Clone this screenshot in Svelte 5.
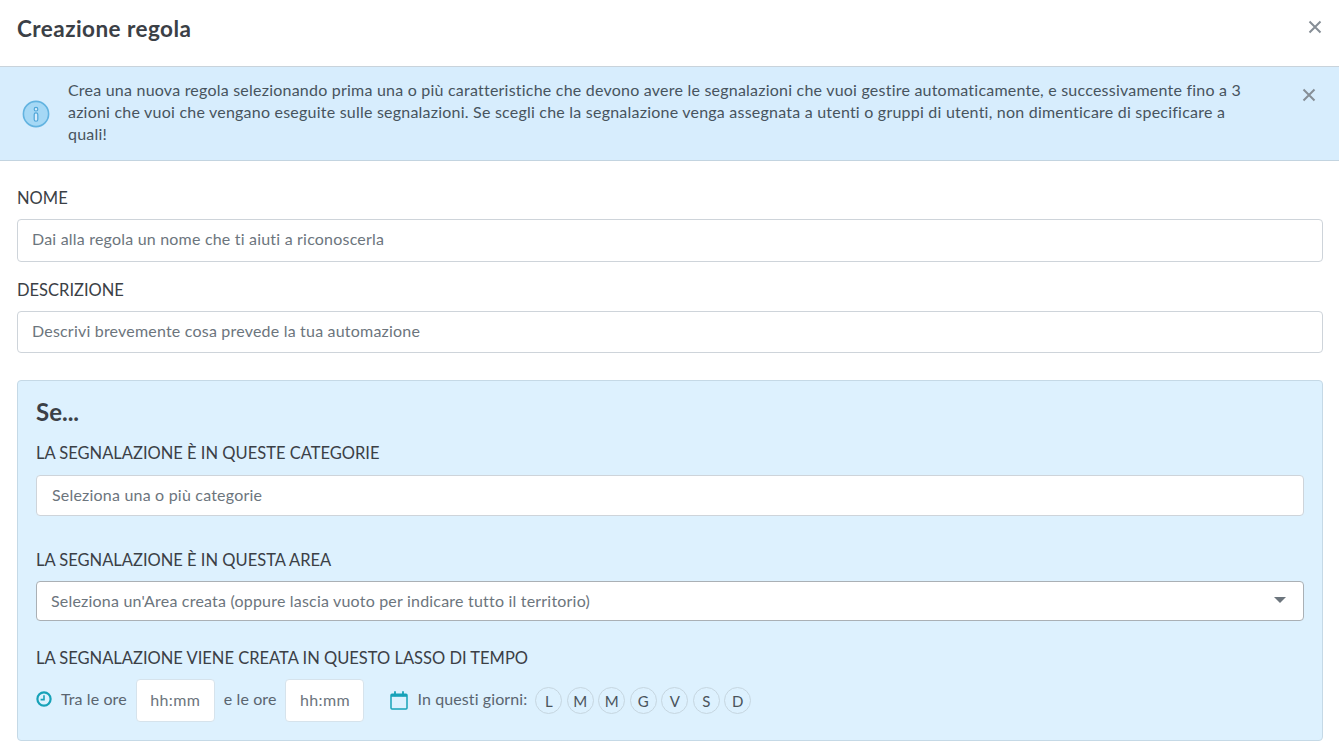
<script>
  const days = ['L', 'M', 'M', 'G', 'V', 'S', 'D'];
</script>

<div class="modal">
  <header class="head">
    <h2>Creazione regola</h2>
    <button class="close big" aria-label="Chiudi">
      <svg width="14" height="14" viewBox="0 0 14 14"><path d="M1.5 1.5l11 11M12.5 1.5l-11 11" /></svg>
    </button>
  </header>

  <div class="alert">
    <svg class="info" width="28" height="28" viewBox="0 0 28 28">
      <circle cx="14" cy="14" r="12.6" fill="#a5d8f5" stroke="#62b3e0" stroke-width="1.6" />
      <circle cx="14" cy="9.2" r="1.8" fill="#d6ecfc" stroke="#4fa6d8" stroke-width="1.2" />
      <rect x="12.2" y="12.8" width="3.6" height="8.4" rx="1.8" fill="#d6ecfc" stroke="#4fa6d8" stroke-width="1.2" />
    </svg>
    <p>Crea una nuova regola selezionando prima una o più caratteristiche che devono avere le segnalazioni che vuoi gestire automaticamente, e successivamente fino a 3 azioni che vuoi che vengano eseguite sulle segnalazioni. Se scegli che la segnalazione venga assegnata a utenti o gruppi di utenti, non dimenticare di specificare a quali!</p>
    <button class="close small" aria-label="Chiudi">
      <svg width="14" height="14" viewBox="0 0 14 14"><path d="M1.5 1.5l11 11M12.5 1.5l-11 11" /></svg>
    </button>
  </div>

  <div class="body">
    <label class="label" for="nome">NOME</label>
    <input id="nome" class="field" placeholder="Dai alla regola un nome che ti aiuti a riconoscerla" />

    <label class="label second" for="descr">DESCRIZIONE</label>
    <input id="descr" class="field desc" placeholder="Descrivi brevemente cosa prevede la tua automazione" />

    <section class="panel">
      <h3>Se...</h3>

      <div class="label">LA SEGNALAZIONE È IN QUESTE CATEGORIE</div>
      <input class="field cat" placeholder="Seleziona una o più categorie" />

      <div class="label area">LA SEGNALAZIONE È IN QUESTA AREA</div>
      <div class="select">
        <span>Seleziona un'Area creata (oppure lascia vuoto per indicare tutto il territorio)</span>
        <i class="caret"></i>
      </div>

      <div class="label time">LA SEGNALAZIONE VIENE CREATA IN QUESTO LASSO DI TEMPO</div>
      <div class="when">
        <svg class="clock" width="16" height="16" viewBox="0 0 16 16">
          <circle cx="8" cy="8" r="6.6" fill="none" stroke="#17a2b8" stroke-width="2.2" />
          <path d="M8 4.2V8.6H4.6" fill="none" stroke="#17a2b8" stroke-width="1.6" />
        </svg>
        <span class="txt first">Tra le ore</span>
        <input class="hour" placeholder="hh:mm" />
        <span class="txt">e le ore</span>
        <input class="hour" placeholder="hh:mm" />
        <svg class="cal" width="18" height="19" viewBox="0 0 18 19">
          <rect x="1" y="3.2" width="16" height="14.8" rx="1" fill="none" stroke="#17a2b8" stroke-width="1.5" />
          <path d="M1 3.2h16v2.6H1z" fill="#17a2b8" />
          <path d="M5 1v3.4M13 1v3.4" stroke="#17a2b8" stroke-width="1.8" stroke-linecap="round" />
        </svg>
        <span class="txt">In questi giorni:</span>
        <div class="days">
          {#each days as d}
            <span class="day">{d}</span>
          {/each}
        </div>
      </div>
    </section>
  </div>
</div>

<style>
  :global(body) {
    margin: 0;
    background: #fff;
    font-family: Lato, "Open Sans", sans-serif;
    color: #343a40;
  }

  .modal {
    height: 751px;
    overflow: hidden;
  }

  .head {
    display: flex;
    justify-content: space-between;
    height: 67px;
    padding: 0 17px;
    box-sizing: border-box;
    border-bottom: 1px solid #c9d3db;
  }

  h2 {
    margin: 15px 0 0;
    font-size: 22.5px;
    line-height: 28px;
    font-weight: 700;
    letter-spacing: 0.45px;
    color: #3b4046;
  }

  .close {
    border: 0;
    padding: 0;
    background: none;
    height: 14px;
  }

  .close path {
    fill: none;
    stroke: #868e96;
    stroke-width: 2;
  }

  .big {
    margin: 20px 0 0 0;
  }

  .alert {
    display: flex;
    align-items: center;
    height: 94px;
    box-sizing: border-box;
    padding-left: 22px;
    background: #d7edfd;
    border-bottom: 1px solid #c3d4e0;
  }

  .alert p {
    width: 1180px;
    margin: 0 0 3px 18px;
    font-size: 16px;
    line-height: 22px;
    letter-spacing: 0.22px;
    color: #47545e;
  }

  .small {
    align-self: flex-start;
    margin: 21px 0 0 54px;
  }

  .body {
    padding: 27px 16px 0 17px;
  }

  .label {
    display: block;
    font-size: 16.5px;
    line-height: 20px;
    color: #3b4046;
  }

  .second {
    margin-top: 18px;
  }

  .field {
    display: block;
    width: 100%;
    box-sizing: border-box;
    height: 43px;
    margin-top: 11px;
    padding: 0 14px 4px;
    background: #fff;
    border: 1px solid #ced4da;
    border-radius: 4px;
    font: inherit;
    font-size: 16px;
    letter-spacing: 0.2px;
    outline: none;
  }

  .desc {
    height: 42px;
    padding-bottom: 3px;
  }

  input::placeholder {
    color: #6c757d;
    opacity: 1;
  }

  .panel {
    margin-top: 27px;
    height: 361px;
    box-sizing: border-box;
    padding: 17px 18px 0;
    background: #ddf1fe;
    border: 1px solid #c5d9e6;
    border-radius: 4px;
  }

  h3 {
    margin: 0 0 17px;
    font-size: 24px;
    line-height: 28px;
    font-weight: 700;
    color: #3b4046;
  }

  .cat {
    height: 41px;
    margin-top: 12px;
    padding: 0 15px 3px;
  }

  .area {
    margin-top: 34px;
  }

  .select {
    display: flex;
    align-items: center;
    justify-content: space-between;
    height: 40px;
    margin-top: 11px;
    box-sizing: border-box;
    padding: 0 17px 2px 14px;
    background: #fff;
    border: 1px solid #aab0b5;
    border-radius: 4px;
    font-size: 16px;
    letter-spacing: 0.2px;
    color: #6c757d;
  }

  .caret {
    width: 0;
    height: 0;
    border: 6px solid transparent;
    border-top-color: #6c757d;
    border-bottom: 0;
  }

  .time {
    margin-top: 27px;
  }

  .when {
    display: flex;
    align-items: center;
    height: 43px;
    margin-top: 11px;
  }

  .txt {
    font-size: 16px;
    letter-spacing: 0.1px;
    color: #5a6570;
    position: relative;
    top: -2px;
  }

  .first {
    margin-left: 9px;
  }

  .clock {
    position: relative;
    top: -2px;
  }

  .hour {
    width: 79px;
    height: 43px;
    box-sizing: border-box;
    margin: 0 9px;
    padding: 0 0 2px;
    text-align: center;
    background: #fff;
    border: 1px solid #d6e3ec;
    border-radius: 4px;
    font: inherit;
    font-size: 16px;
    letter-spacing: 0.4px;
    outline: none;
  }

  .hour + .txt + .hour {
    margin-right: 26px;
  }

  .cal {
    margin-right: 9px;
  }

  .days {
    display: flex;
    gap: 4.5px;
    margin-left: 8px;
  }

  .day {
    width: 27px;
    height: 27px;
    box-sizing: border-box;
    display: flex;
    align-items: center;
    justify-content: center;
    border: 1px solid #c6d6e0;
    border-radius: 50%;
    font-size: 15px;
    color: #4a545c;
  }
</style>
